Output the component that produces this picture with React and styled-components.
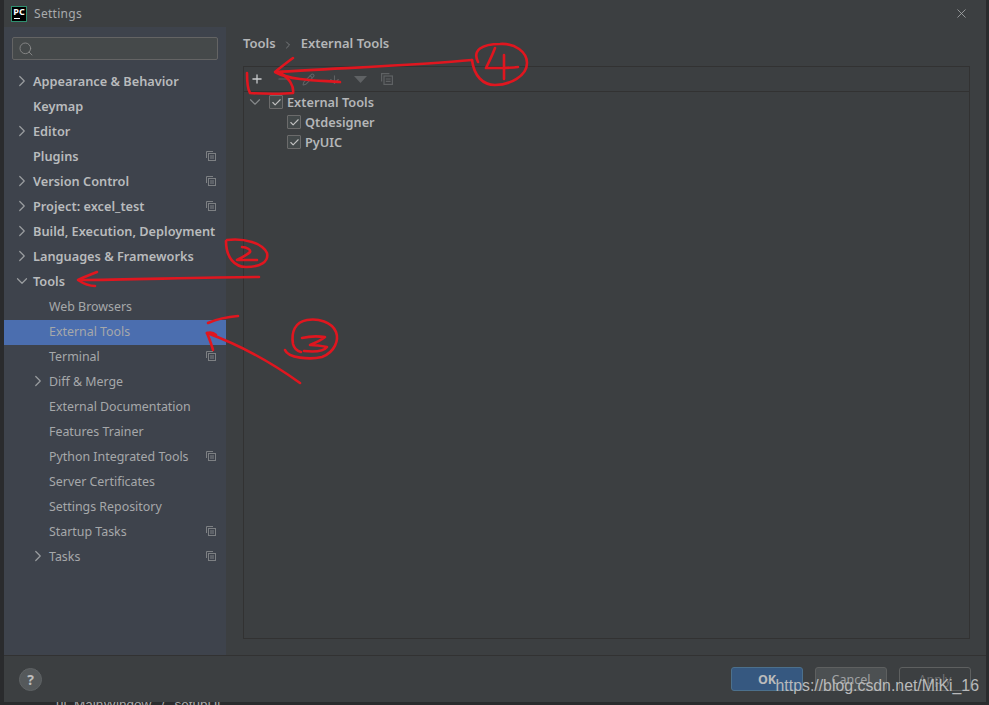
import React from 'react';
import styled, { createGlobalStyle } from 'styled-components';
import { ChevronRight, ChevronDown, Search, X, Plus, Minus, Pencil, Check, ArrowDown } from 'lucide-react';

const GlobalStyle = createGlobalStyle`
    html, body {
        margin: 0;
        padding: 0;
        background: #2b2b2b;
    }
    body {
        font-family: "Noto Sans", "Open Sans", sans-serif;
    }
`;

const Screen = styled.div`
    position: relative;
    width: 989px;
    height: 705px;
    overflow: hidden;
    background: #2a2b2d;
    padding: 0 3px 3px 4px;
    box-sizing: border-box;
`;

const Window = styled.div`
    position: relative;
    height: 702px;
    display: flex;
    flex-direction: column;
    background: #3c3f41;
    color: #bbbbbb;
`;

const TitleBar = styled.div`
    height: 27px;
    flex: none;
    display: flex;
    align-items: center;
    padding: 0 17px 0 7px;
    gap: 7px;
    font-size: 12px;
    color: #a9abad;
`;

const Logo = styled.div`
    width: 16px;
    height: 16px;
    box-sizing: border-box;
    background: #000;
    border: 1px solid #2f8f6f;
    color: #fff;
    font-size: 9px;
    line-height: 10px;
    font-weight: 700;
    text-align: center;
    position: relative;
    &::after {
        content: '';
        position: absolute;
        left: 2px;
        bottom: 2px;
        width: 6px;
        height: 1px;
        background: #fff;
    }
`;

const TitleText = styled.span`
    flex: 1;
    letter-spacing: 0.3px;
`;

const Body = styled.div`
    flex: 1;
    display: flex;
    min-height: 0;
`;

const Sidebar = styled.div`
    width: 222px;
    flex: none;
    background: #3e434c;
    padding-top: 10px;
    box-sizing: border-box;
`;

const SearchBox = styled.div`
    height: 23px;
    margin: 0 8px 10px 8px;
    background: #45494a;
    border: 1px solid #646464;
    border-radius: 2px;
    display: flex;
    align-items: center;
    padding-left: 5px;
    color: #8c8c8c;
    box-sizing: border-box;
`;

const NavRow = styled.div`
    height: 25px;
    box-sizing: border-box;
    display: flex;
    align-items: center;
    position: relative;
    padding-left: ${(p) => (p.$child ? 45 : 29)}px;
    padding-bottom: ${(p) => (p.$child ? 2 : 3)}px;
    font-size: ${(p) => (p.$child ? 12.4 : 12.75)}px;
    font-weight: ${(p) => (p.$child ? 400 : 600)};
    color: ${(p) => (p.$child ? '#a6a8aa' : '#b9bbbd')};
    background: ${(p) => (p.$selected ? '#4b6eaf' : 'transparent')};
    white-space: nowrap;
`;

const Arrow = styled.span`
    position: absolute;
    left: ${(p) => (p.$child ? 25 : 9)}px;
    top: 2px;
    height: 18px;
    color: #9a9da0;
`;

const CopyMark = styled.span`
    position: absolute;
    right: 10px;
    top: 6px;
    display: flex;
`;

const Main = styled.div`
    flex: 1;
    display: flex;
    flex-direction: column;
    padding: 0 16px 16px 17px;
    min-width: 0;
`;

const Crumbs = styled.div`
    height: 39px;
    flex: none;
    box-sizing: border-box;
    padding-bottom: 8px;
    display: flex;
    align-items: center;
    gap: 6.5px;
    font-size: 13px;
    font-weight: 600;
    color: #b4b6b8;
`;

const CrumbSep = styled.span`
    height: 12px;
    color: #85888a;
`;

const Panel = styled.div`
    flex: 1;
    border: 1px solid #323232;
`;

const Toolbar = styled.div`
    height: 24px;
    border-bottom: 1px solid #323232;
    display: flex;
    align-items: center;
    padding-left: 4px;
    gap: 9px;
    color: #5f6264;
`;

const ToolIcon = styled.span`
    width: 17px;
    height: 16px;
    display: flex;
    align-items: center;
    justify-content: center;
    color: ${(p) => (p.$active ? '#c9cbcd' : '#5f6264')};
`;

const TreeRow = styled.div`
    height: 20px;
    display: flex;
    align-items: center;
    gap: 4px;
    padding-left: ${(p) => (p.$nested ? 43 : 25)}px;
    position: relative;
    font-size: 12.75px;
    font-weight: 600;
    color: #b4b6b8;
`;

const TreeArrow = styled.span`
    position: absolute;
    left: 2px;
    top: 1px;
    height: 18px;
    color: #85888a;
`;

const Checkbox = styled.span`
    width: 12px;
    height: 12px;
    flex: none;
    border: 1px solid #6b6b6b;
    background: #43494a;
    border-radius: 1px;
    display: flex;
    align-items: center;
    justify-content: center;
    color: #c0c0c0;
`;

const Footer = styled.div`
    height: 47px;
    flex: none;
    border-top: 1px solid #323232;
    box-sizing: border-box;
    display: flex;
    align-items: center;
    padding: 0 15px;
    justify-content: space-between;
`;

const Help = styled.div`
    width: 23px;
    height: 23px;
    border-radius: 50%;
    background: #55595b;
    border: 1px solid #5f6365;
    box-sizing: border-box;
    color: #bdbdbd;
    font-size: 14px;
    font-weight: 700;
    line-height: 21px;
    text-align: center;
`;

const Buttons = styled.div`
    display: flex;
    gap: 12px;
`;

const Button = styled.div`
    width: 72px;
    height: 24px;
    box-sizing: border-box;
    border-radius: 3px;
    border: 1px solid ${(p) => (p.$primary ? '#4c708c' : '#5e6060')};
    background: ${(p) => (p.$primary ? '#365880' : p.$off ? 'transparent' : '#4c5052')};
    color: ${(p) => (p.$primary ? '#bbbbbb' : p.$off ? '#6f7173' : '#a0a2a4')};
    font-size: 12.5px;
    font-weight: ${(p) => (p.$primary ? 700 : 400)};
    display: flex;
    align-items: center;
    justify-content: center;
`;

const Watermark = styled.div`
    position: absolute;
    right: 10px;
    top: 677px;
    font-family: "Liberation Sans", sans-serif;
    font-size: 15.85px;
    line-height: 18px;
    color: #b9babb;
    white-space: nowrap;
`;

const BehindText = styled.div`
    position: absolute;
    left: 56px;
    top: 698px;
    font-family: "Liberation Sans", sans-serif;
    font-size: 13.5px;
    line-height: 14px;
    word-spacing: 6px;
    color: #a8a8a8;
    white-space: nowrap;
`;

const Scribbles = styled.svg`
    position: absolute;
    left: 0;
    top: 0;
    pointer-events: none;
`;

const navItems = [
    { label: 'Appearance & Behavior', arrow: 'right' },
    { label: 'Keymap' },
    { label: 'Editor', arrow: 'right' },
    { label: 'Plugins', copy: true },
    { label: 'Version Control', arrow: 'right', copy: true },
    { label: 'Project: excel_test', arrow: 'right', copy: true },
    { label: 'Build, Execution, Deployment', arrow: 'right' },
    { label: 'Languages & Frameworks', arrow: 'right' },
    { label: 'Tools', arrow: 'down' },
    { label: 'Web Browsers', child: true },
    { label: 'External Tools', child: true, selected: true },
    { label: 'Terminal', child: true, copy: true },
    { label: 'Diff & Merge', child: true, arrow: 'right' },
    { label: 'External Documentation', child: true },
    { label: 'Features Trainer', child: true },
    { label: 'Python Integrated Tools', child: true, copy: true },
    { label: 'Server Certificates', child: true },
    { label: 'Settings Repository', child: true },
    { label: 'Startup Tasks', child: true, copy: true },
    { label: 'Tasks', child: true, arrow: 'right', copy: true },
];

function CopyIcon({ color = '#7d8083', size = 10 }) {
    return (
        <svg width={size} height={size} viewBox="0 0 10 10" fill="none" stroke={color} strokeWidth="1">
            <path d="M0.5 7V0.5H7" />
            <rect x="2.5" y="2.5" width="7" height="7" />
            <path d="M4 5H8M4 7H8" />
        </svg>
    );
}

function NavItem({ item }) {
    const Icon = item.arrow === 'down' ? ChevronDown : ChevronRight;
    return (
        <NavRow $child={item.child} $selected={item.selected}>
            {item.arrow && (
                <Arrow $child={item.child}>
                    <Icon size={18} strokeWidth={1.6} />
                </Arrow>
            )}
            {item.label}
            {item.copy && (
                <CopyMark>
                    <CopyIcon />
                </CopyMark>
            )}
        </NavRow>
    );
}

function Tick() {
    return <Check size={11} strokeWidth={2.4} />;
}

const RED = '#e0161f';

function Annotations() {
    return (
        <Scribbles width="989" height="705" viewBox="0 0 989 705" fill="none" stroke={RED} strokeWidth="2.6" strokeLinecap="round" strokeLinejoin="round">
            {/* 4: arrow to the plus button */}
            <path d="M472 60C420 65 340 68 276 72" />
            <path d="M293 58C286 63 280 68 275 72C282 76 292 78 300 79C315 81 330 81 340 82" />
            <path d="M247 73C247 80 247 88 250 93C262 94 285 94 293 93C294 87 290 78 280 73" />
            <path d="M478 62C472 50 482 44 500 44C515 43 527 52 527 63C527 76 510 85 495 85C483 85 474 76 472 60" />
            <path d="M495 48C492 56 488 64 486 68C496 68 510 68 518 67M504 55C504 62 504 72 504 79" />
            {/* 2: arrow to Tools */}
            <path d="M259 277C200 277 130 280 79 280" />
            <path d="M97 272C90 275 84 277 78 280C84 284 90 286 95 286" />
            <path d="M227 240C245 238 262 243 267 253C269 262 260 267 246 267C235 267 226 258 226 241" />
            <path d="M242 247C247 247 251 250 250 252C247 255 241 258 237 260C243 260 251 260 257 260" />
            {/* 3: arrow to External Tools */}
            <path d="M238 316C225 317 215 320 208 323" />
            <path d="M300 383C275 365 240 345 207 333" />
            <path d="M207 333C209 338 212 346 213 350M207 333C211 332 214 333 216 335" />
            <path d="M285 350C288 358 310 360 322 357C335 352 339 340 336 332C332 322 318 318 307 320C295 322 291 332 293 344C294 348 297 351 301 352" />
            <path d="M302 338C310 336 318 336 325 337C320 341 315 343 310 345C316 345 322 346 327 347C324 351 314 352 304 351" />
        </Scribbles>
    );
}

function App() {
    return (
        <>
            <GlobalStyle />
            <Screen>
                <BehindText>ui_MainWindow / setupUi</BehindText>
                <Window>
                    <TitleBar>
                        <Logo>PC</Logo>
                        <TitleText>Settings</TitleText>
                        <X size={15} strokeWidth={1.3} />
                    </TitleBar>
                    <Body>
                        <Sidebar>
                            <SearchBox>
                                <Search size={16} strokeWidth={1.3} />
                            </SearchBox>
                            {navItems.map((item) => (
                                <NavItem key={item.label} item={item} />
                            ))}
                        </Sidebar>
                        <Main>
                            <Crumbs>
                                <span>Tools</span>
                                <CrumbSep>
                                    <ChevronRight size={12} strokeWidth={1.6} />
                                </CrumbSep>
                                <span>External Tools</span>
                            </Crumbs>
                            <Panel>
                                <Toolbar>
                                    <ToolIcon $active>
                                        <Plus size={14} strokeWidth={2.2} />
                                    </ToolIcon>
                                    <ToolIcon>
                                        <Minus size={14} strokeWidth={2} />
                                    </ToolIcon>
                                    <ToolIcon>
                                        <Pencil size={13} strokeWidth={2} />
                                    </ToolIcon>
                                    <ToolIcon>
                                        <ArrowDown size={13} strokeWidth={2} />
                                    </ToolIcon>
                                    <ToolIcon>
                                        <svg width="13" height="7" viewBox="0 0 13 7">
                                            <path d="M0 0H13L6.5 7Z" fill="currentColor" />
                                        </svg>
                                    </ToolIcon>
                                    <ToolIcon>
                                        <CopyIcon color="#5f6264" size={12} />
                                    </ToolIcon>
                                </Toolbar>
                                <div>
                                    <TreeRow>
                                        <TreeArrow>
                                            <ChevronDown size={18} strokeWidth={1.5} />
                                        </TreeArrow>
                                        <Checkbox>
                                            <Tick />
                                        </Checkbox>
                                        External Tools
                                    </TreeRow>
                                    <TreeRow $nested>
                                        <Checkbox>
                                            <Tick />
                                        </Checkbox>
                                        Qtdesigner
                                    </TreeRow>
                                    <TreeRow $nested>
                                        <Checkbox>
                                            <Tick />
                                        </Checkbox>
                                        PyUIC
                                    </TreeRow>
                                </div>
                            </Panel>
                        </Main>
                    </Body>
                    <Footer>
                        <Help>?</Help>
                        <Buttons>
                            <Button $primary>OK</Button>
                            <Button>Cancel</Button>
                            <Button $off>Apply</Button>
                        </Buttons>
                    </Footer>
                </Window>
                <Annotations />
                <Watermark>https://blog.csdn.net/MiKi_16</Watermark>
            </Screen>
        </>
    );
}

export default App;
